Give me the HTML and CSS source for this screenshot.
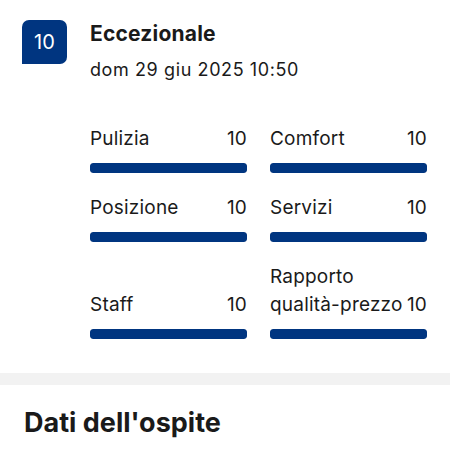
FILE: index.html
```html
<!DOCTYPE html>
<html lang="it">
<head>
<meta charset="utf-8">
<link rel="stylesheet" href="styles.css">
</head>
<body>
<section class="review">
  <div class="header">
    <div class="badge">10</div>
    <div class="head-text">
      <div class="title">Eccezionale</div>
      <div class="date">dom 29 giu 2025 10:50</div>
    </div>
  </div>
  <div class="scores">
    <div class="score">
      <div class="score-row"><span class="label">Pulizia</span><span class="value">10</span></div>
      <div class="bar"><div class="fill" style="width:100%"></div></div>
    </div>
    <div class="score">
      <div class="score-row"><span class="label">Comfort</span><span class="value">10</span></div>
      <div class="bar"><div class="fill" style="width:100%"></div></div>
    </div>
    <div class="score">
      <div class="score-row"><span class="label">Posizione</span><span class="value">10</span></div>
      <div class="bar"><div class="fill" style="width:100%"></div></div>
    </div>
    <div class="score">
      <div class="score-row"><span class="label">Servizi</span><span class="value">10</span></div>
      <div class="bar"><div class="fill" style="width:100%"></div></div>
    </div>
    <div class="score">
      <div class="score-row"><span class="label">Staff</span><span class="value">10</span></div>
      <div class="bar"><div class="fill" style="width:100%"></div></div>
    </div>
    <div class="score">
      <div class="score-row"><span class="label">Rapporto qualità-prezzo</span><span class="value">10</span></div>
      <div class="bar"><div class="fill" style="width:100%"></div></div>
    </div>
  </div>
</section>
<div class="divider"></div>
<section class="guest">
  <h2 class="guest-title">Dati dell'ospite</h2>
</section>
</body>
</html>
```
FILE: styles.css
```css
html, body {
  margin: 0;
  padding: 0;
  background: #ffffff;
}
body {
  font-family: Inter, "Liberation Sans", sans-serif;
  color: #1a1a1a;
  width: 450px;
  overflow: hidden;
}
.review {
  padding: 20px 23px 34px 22px;
}
.header {
  display: flex;
  align-items: flex-start;
  gap: 23px;
}
.badge {
  width: 45px;
  height: 44px;
  flex: none;
  background: #003580;
  color: #ffffff;
  border-radius: 7px 7px 7px 0;
  display: flex;
  align-items: center;
  justify-content: center;
  font-size: 20px;
  font-weight: 400;
}
.head-text {
  display: flex;
  flex-direction: column;
}
.title {
  font-size: 21px;
  font-weight: 700;
  line-height: 28px;
  margin-top: 0;
  letter-spacing: 0.2px;
}
.date {
  font-size: 18px;
  line-height: 28px;
  margin-top: 8px;
  letter-spacing: 0.6px;
}
.scores {
  margin-top: 41px;
  margin-left: 68px;
  display: grid;
  grid-template-columns: 1fr 1fr;
  column-gap: 23px;
  row-gap: 21px;
  align-items: end;
}
.score-row {
  display: flex;
  justify-content: space-between;
  align-items: flex-end;
  font-size: 19px;
  line-height: 28px;
  letter-spacing: 0.2px;
}
.label {
  flex: 1;
}
.bar {
  margin-top: 10px;
  height: 10px;
  border-radius: 3px;
  background: #e6e6e6;
  overflow: hidden;
}
.fill {
  height: 100%;
  background: #003580;
  border-radius: 3px;
}
.divider {
  height: 12px;
  background: #f2f2f2;
}
.guest {
  padding: 21px 24px;
}
.guest-title {
  margin: 0;
  font-size: 27px;
  font-weight: 700;
  line-height: 34px;
}
```
